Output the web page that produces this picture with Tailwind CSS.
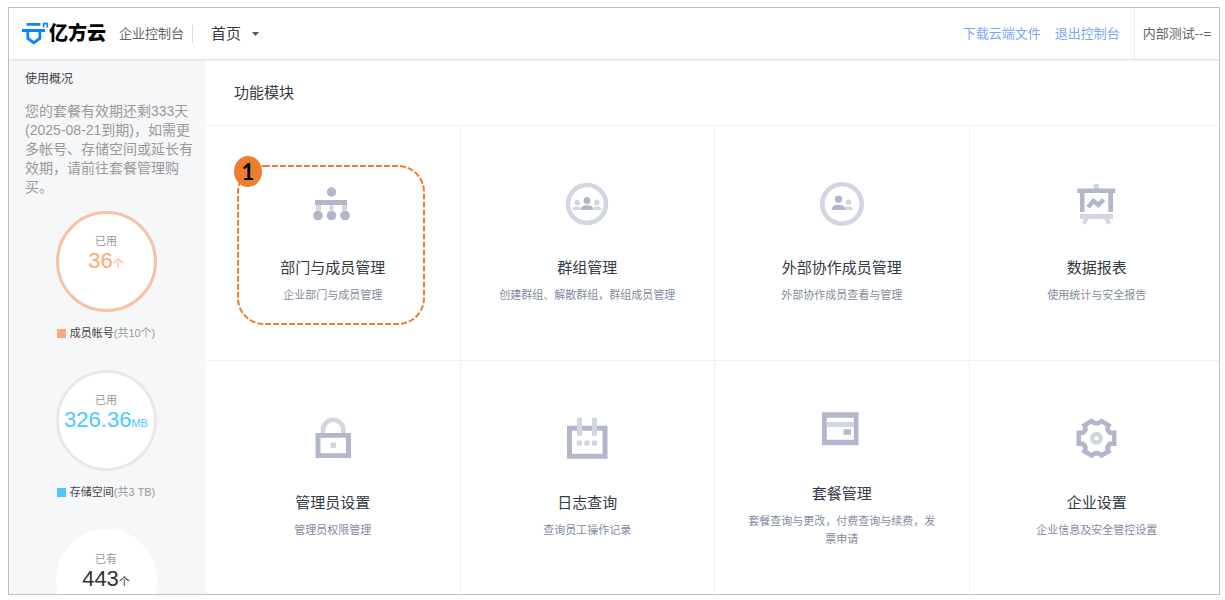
<!DOCTYPE html>
<html lang="zh-CN">
<head>
<meta charset="utf-8">
<meta name="viewport" content="width=device-width, initial-scale=1">
<title>亿方云 企业控制台</title>
<script src="https://cdn.jsdelivr.net/npm/@tailwindcss/browser@4"></script>
</head>
<body class="flex h-screen bg-white pt-[7px] pr-[5px] pb-[5px] pl-2 font-['Liberation_Sans','Noto_Sans_CJK_SC',sans-serif] text-[#333b47]">
<div class="flex min-w-0 flex-1 flex-col overflow-hidden border border-[#bfbfbf]">

  <header class="z-10 flex h-[52px] shrink-0 items-center border-b border-[#e4e5e7] pl-[13px] shadow-[0_1px_2px_rgba(0,0,0,0.05)]">
    <a href="#" class="flex items-center">
      <svg class="h-6 w-[27px]" viewBox="0 0 27 24" fill="none" stroke="#0b84ff" aria-hidden="true">
        <path d="M4.500 2.300H18.500M0 8.500H23" stroke-width="2.800"/>
        <path d="M5.800 9V16.500L11.800 20.700L17.800 16.500V9" stroke-width="2.800"/>
        <path d="M21.600 5.500V1.600H25.300V5.500" stroke-width="1.600"/>
      </svg>
      <span class="text-[19px] leading-6 font-black text-black">亿方云</span>
    </a>
    <span class="ml-[13px] text-[13px] leading-5 text-[#666]">企业控制台</span>
    <span class="ml-2 h-[18px] w-px bg-[#dcdcdc]"></span>
    <button type="button" class="ml-[18px] flex items-center gap-[11px] text-[15px] leading-5">
      首页
      <svg class="h-1 w-[7px]" viewBox="0 0 7 4" fill="#555" aria-hidden="true"><path d="M0 0H7L3.500 4Z"/></svg>
    </button>
    <nav class="ml-auto flex gap-[14px] pr-[14px] text-[13px] leading-5 text-[#7ea6fb]">
      <a href="#">下载云端文件</a>
      <a href="#">退出控制台</a>
    </nav>
    <div class="flex h-full items-center border-l border-[#ededed] px-2 text-[13px] leading-5 text-[#666]">内部测试--=</div>
  </header>

  <div class="flex min-h-0 flex-1">
    <aside class="w-[197px] shrink-0 overflow-hidden bg-[#f5f7f9] pt-[10px] pr-3 pl-4">
      <h2 class="text-xs leading-[18px] text-[#444]">使用概况</h2>
      <p class="mt-[14px] text-sm leading-[19px] text-[#999]">您的套餐有效期还剩333天(2025-08-21到期)，如需更多帐号、存储空间或延长有效期，请前往套餐管理购买。</p>
      <ul class="mt-[14px] flex flex-col items-center gap-7 pr-[7px] text-[11px] text-[#999]">
        <li class="flex flex-col items-center">
          <div class="flex size-[101px] flex-col items-center rounded-full border-3 border-[#f8c1a6] bg-white pt-[19px]">
            <span class="leading-4">已用</span>
            <span class="leading-6 text-[#fea676]"><b class="text-[22px] font-normal">36</b>个</span>
          </div>
          <div class="mt-3 flex items-center gap-1 leading-[18px]"><i class="size-[9px] bg-[#ffa97a]"></i><span><span class="text-[#444]">成员帐号</span>(共10个)</span></div>
        </li>
        <li class="flex flex-col items-center">
          <div class="flex size-[101px] flex-col items-center rounded-full border-3 border-[#e8e8e8] bg-white pt-[19px]">
            <span class="leading-4">已用</span>
            <span class="leading-6 text-[#4cc8ff]"><b class="text-[22px] font-normal">326.36</b>MB</span>
          </div>
          <div class="mt-3 flex items-center gap-1 leading-[18px]"><i class="size-[9px] bg-[#4cc8ff]"></i><span><span class="text-[#444]">存储空间</span>(共3 TB)</span></div>
        </li>
        <li class="flex flex-col items-center">
          <div class="flex size-[101px] flex-col items-center rounded-full border-3 border-white bg-white pt-[19px]">
            <span class="leading-4">已有</span>
            <span class="leading-6 text-[#333]"><b class="text-[22px] font-normal">443</b>个</span>
          </div>
        </li>
      </ul>
    </aside>

    <main class="min-w-0 flex-1 overflow-hidden">
      <h1 class="flex h-[66px] items-center border-b border-[#f0f0f2] pl-7 text-[15px] leading-5">功能模块</h1>
      <div class="-mr-[5px] grid auto-rows-[235px] grid-cols-4 text-center text-[11px] leading-[18px] text-[#838ba1]">

        <a href="#" class="relative flex flex-col items-center justify-center border-r border-b border-[#f0f0f2] px-8">
          <svg class="h-11 w-11" viewBox="0 0 44 44" fill="#b1b6cb" aria-hidden="true">
            <path fill="#d2d5e2" d="M5 22.500h5v6H5zM18.500 22.500h4v6h-4zM31 22.500h5v6h-5z"/>
            <circle cx="20.500" cy="10" r="4.700"/><path d="M4 18h32v5H4z"/>
            <circle cx="7" cy="33.500" r="4.800"/><circle cx="20.500" cy="33.500" r="4.800"/><circle cx="34" cy="33.500" r="4.800"/>
          </svg>
          <h3 class="mt-8 text-[15px] leading-5 text-[#333b47]">部门与成员管理</h3>
          <p class="mt-2">企业部门与成员管理</p>
          <svg class="absolute top-[39px] left-[31px] h-[160px] w-[188px]" viewBox="0 0 188 160" fill="none" aria-hidden="true">
            <rect x="1" y="1" width="186" height="158" rx="26" stroke="#ed7d31" stroke-width="2" stroke-dasharray="6 2"/>
          </svg>
          <span class="absolute top-[30px] left-7 flex h-[31px] w-7 items-center justify-center rounded-[50%] bg-[#ed7d31] font-[Lato] text-[22px] leading-none font-bold text-black">1</span>
        </a>

        <a href="#" class="flex flex-col items-center justify-center border-r border-b border-[#f0f0f2] px-8">
          <svg class="h-11 w-11" viewBox="0 0 44 44" fill="#b1b6cb" aria-hidden="true">
            <circle cx="22" cy="22" r="19" fill="none" stroke="#d2d5e2" stroke-width="4.500"/>
            <g fill="#d2d5e2"><circle cx="12.200" cy="20.500" r="2.700"/><circle cx="31.800" cy="20.500" r="2.700"/><path d="M7.500 28Q7.500 24.500 12 24.500Q14.500 24.500 15.500 25.500L14.500 28ZM36.500 28Q36.500 24.500 32 24.500Q29.500 24.500 28.500 25.500L29.500 28Z"/></g>
            <circle cx="22" cy="18.500" r="3.500"/><path d="M15.500 28Q15.500 23.200 22 23.200Q28.500 23.200 28.500 28Z"/>
          </svg>
          <h3 class="mt-8 text-[15px] leading-5 text-[#333b47]">群组管理</h3>
          <p class="mt-2">创建群组、解散群组，群组成员管理</p>
        </a>

        <a href="#" class="flex flex-col items-center justify-center border-r border-b border-[#f0f0f2] px-8">
          <svg class="h-11 w-11" viewBox="0 0 44 44" fill="#b1b6cb" aria-hidden="true">
            <circle cx="22" cy="22" r="19.700" fill="none" stroke="#d2d5e2" stroke-width="4.600"/>
            <g fill="#d2d5e2"><circle cx="28.500" cy="20.200" r="2.700"/><path d="M25.500 28L24.500 25Q33 23.200 33 28Z"/></g>
            <circle cx="18.500" cy="17.200" r="3.600"/><path d="M11.700 28Q11.700 22.700 18.500 22.700Q25.300 22.700 25.300 28Z"/>
          </svg>
          <h3 class="mt-8 text-[15px] leading-5 text-[#333b47]">外部协作成员管理</h3>
          <p class="mt-2">外部协作成员查看与管理</p>
        </a>

        <a href="#" class="flex flex-col items-center justify-center border-b border-[#f0f0f2] px-8">
          <svg class="h-11 w-11" viewBox="0 0 44 44" fill="#b1b6cb" aria-hidden="true">
            <path fill="#d2d5e2" d="M18.700 2h5v5h-5zM5 32h33v5h-4l2 4-4 1.500-2.500-5.500H13.500L11 42.500 7 41l2-4H5z"/>
            <path d="M2.200 6.500h38v4.500H38v19h-4.700V11H9.500v19H5V11H2.200z"/>
            <path d="M13 25L18.500 19L23.500 23L28.500 17.500" fill="none" stroke="#b1b6cb" stroke-width="4.500"/>
          </svg>
          <h3 class="mt-8 text-[15px] leading-5 text-[#333b47]">数据报表</h3>
          <p class="mt-2">使用统计与安全报告</p>
        </a>

        <a href="#" class="flex flex-col items-center justify-center border-r border-b border-[#f0f0f2] px-8">
          <svg class="h-11 w-11" viewBox="0 0 44 44" fill="#b1b6cb" aria-hidden="true">
            <path d="M12 17V13A10.200 10.200 0 0 1 32.400 13V17" fill="none" stroke="#d2d5e2" stroke-width="4.500"/>
            <path fill-rule="evenodd" d="M4.500 16h35.500v25H4.500zM9.500 20.800h25.500v15.400H9.500z"/><path fill="#d2d5e2" d="M19.500 25.500h5.500v5.500h-5.500z"/>
          </svg>
          <h3 class="mt-8 text-[15px] leading-5 text-[#333b47]">管理员设置</h3>
          <p class="mt-2">管理员权限管理</p>
        </a>

        <a href="#" class="flex flex-col items-center justify-center border-r border-b border-[#f0f0f2] px-8">
          <svg class="h-11 w-11" viewBox="0 0 44 44" fill="#b1b6cb" aria-hidden="true">
            <path fill-rule="evenodd" d="M2 8.700h40.500v33H2zM7 13.700h30.500v23H7z"/>
            <path fill="#d2d5e2" d="M12 .8h5v18h-5zM27 .8h5v18h-5zM12 23.500h5v5h-5zM19.500 23.500h5v5h-5zM27 23.500h5v5h-5z"/>
          </svg>
          <h3 class="mt-8 text-[15px] leading-5 text-[#333b47]">日志查询</h3>
          <p class="mt-2">查询员工操作记录</p>
        </a>

        <a href="#" class="flex flex-col items-center justify-center border-r border-b border-[#f0f0f2] px-8">
          <svg class="h-11 w-11" viewBox="0 0 44 44" fill="#b1b6cb" aria-hidden="true">
            <path fill-rule="evenodd" d="M2 4.300h36.500v33H2zM6.800 9.800h27v22h-27z"/><path fill="#d2d5e2" d="M6.800 14h27v5h-27z"/><path d="M23.500 21.300h7.500v5.500h-7.500z"/>
          </svg>
          <h3 class="mt-8 text-[15px] leading-5 text-[#333b47]">套餐管理</h3>
          <p class="mt-2">套餐查询与更改，付费查询与续费，发票申请</p>
        </a>

        <a href="#" class="flex flex-col items-center justify-center border-b border-[#f0f0f2] px-8">
          <svg class="h-11 w-11" viewBox="0 0 44 44" aria-hidden="true">
            <path transform="translate(21.500 21.300)" d="M-17.700 -5.500H-13.500Q-9.500 -8.500 -12 -13L-5 -17.200Q0 -12.500 5 -17.200L12 -13Q9.500 -8.500 13.500 -5.500H17.700V5.500H13.500Q9.500 8.500 12 13L5 17.200Q0 12.500 -5 17.200L-12 13Q-9.500 8.500 -13.500 5.500H-17.700Z" fill="none" stroke="#b1b6cb" stroke-width="4.600"/>
            <circle cx="21.500" cy="21.300" r="4.300" fill="none" stroke="#d2d5e2" stroke-width="4.400"/>
          </svg>
          <h3 class="mt-8 text-[15px] leading-5 text-[#333b47]">企业设置</h3>
          <p class="mt-2">企业信息及安全管控设置</p>
        </a>
      </div>
    </main>
  </div>
</div>
</body>
</html>
